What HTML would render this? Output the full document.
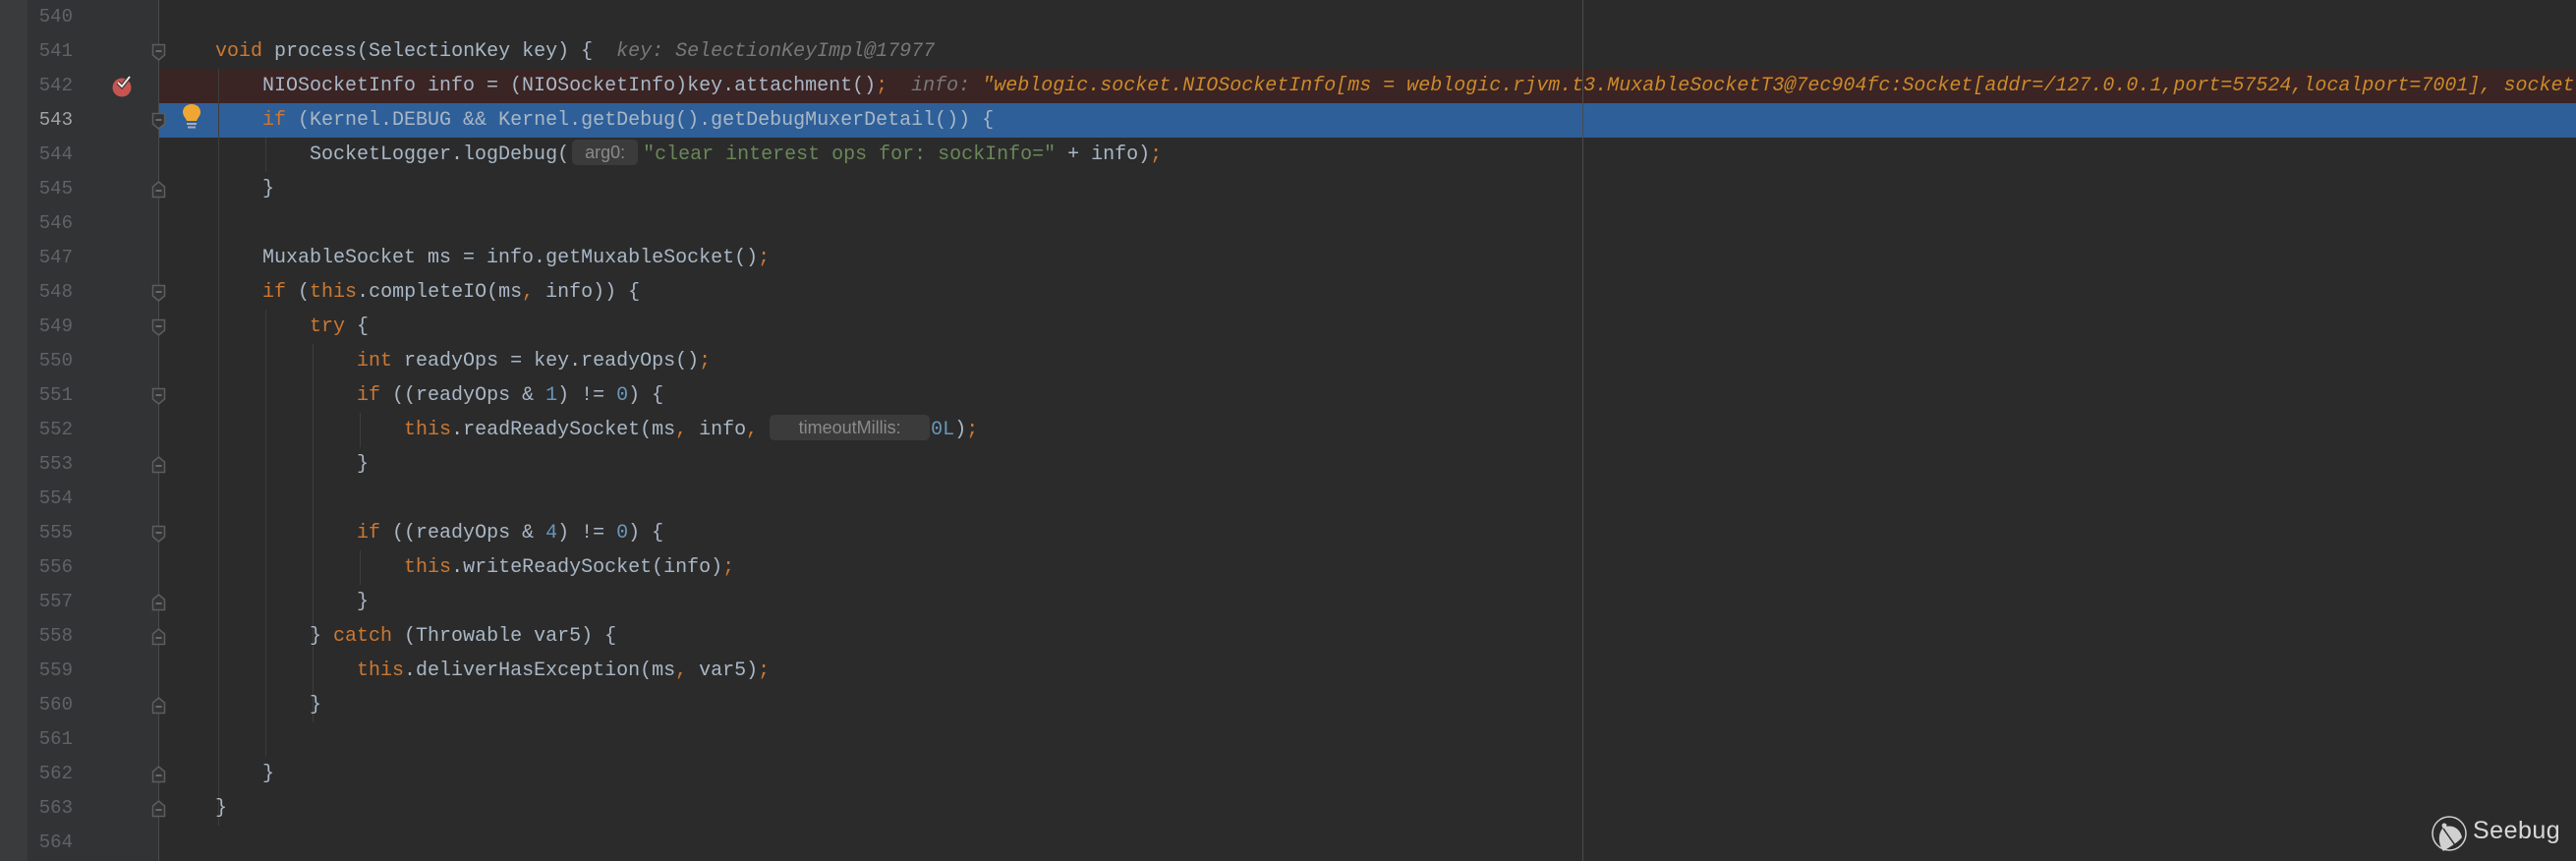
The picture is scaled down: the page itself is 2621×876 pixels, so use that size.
<!DOCTYPE html>
<html><head><meta charset="utf-8"><style>
html,body{margin:0;padding:0;width:2621px;height:876px;overflow:hidden;background:#2b2b2b;}
.strip{position:absolute;left:0;top:0;width:28px;height:876px;background:#393b3d;}
.gut{position:absolute;left:28px;top:0;width:133px;height:876px;background:#313335;}
.fl{position:absolute;left:161px;top:0;width:1px;height:876px;background:#4a4a4a;}
.ln{position:absolute;left:28px;width:46px;text-align:right;font:19px "Liberation Mono",monospace;color:#606366;line-height:35px;height:35px;}
.row{position:absolute;left:161px;width:2460px;height:35px;}
.c{position:absolute;left:171px;font:20px "Liberation Mono",monospace;line-height:35px;height:35px;white-space:pre;color:#a9b7c6;}
.k{color:#cc7832}.s{color:#6a8759}.n{color:#6897bb}
.dbg{font-style:italic;color:#787878}
.dv{font-style:italic;color:#cc8a2a}
.hint{display:inline-block;background:#3b3b3b;color:#8a8a8a;font:18px "Liberation Sans",sans-serif;border-radius:5px;line-height:26px;height:26px;vertical-align:1px;text-align:center;}
.g{position:absolute;width:1px;background:#3d3d3d;}
.fm{position:absolute;left:154px;width:15px;height:18px;}
.rm{position:absolute;left:1610px;top:0;width:1px;height:876px;background:#4b4b4b;}
</style></head><body>
<div class="strip"></div><div class="gut"></div>
<div class="row" style="top:70px;background:#3a2424"></div>
<div class="row" style="top:105px;background:#2e5f99"></div>
<div class="fl"></div>
<div class="rm"></div>

<!-- indent guides -->
<div class="g" style="left:222px;top:70px;height:770px"></div>
<div class="g" style="left:270px;top:140px;height:35px"></div>
<div class="g" style="left:270px;top:315px;height:455px"></div>
<div class="g" style="left:318px;top:350px;height:385px"></div>
<div class="g" style="left:366px;top:420px;height:35px"></div>
<div class="g" style="left:366px;top:560px;height:35px"></div>

<div class="ln" style="top:0">540</div>
<div class="ln" style="top:35px">541</div>
<div class="ln" style="top:70px">542</div>
<div class="ln" style="top:105px;color:#a4a3a3">543</div>
<div class="ln" style="top:140px">544</div>
<div class="ln" style="top:175px">545</div>
<div class="ln" style="top:210px">546</div>
<div class="ln" style="top:245px">547</div>
<div class="ln" style="top:280px">548</div>
<div class="ln" style="top:315px">549</div>
<div class="ln" style="top:350px">550</div>
<div class="ln" style="top:385px">551</div>
<div class="ln" style="top:420px">552</div>
<div class="ln" style="top:455px">553</div>
<div class="ln" style="top:490px">554</div>
<div class="ln" style="top:525px">555</div>
<div class="ln" style="top:560px">556</div>
<div class="ln" style="top:595px">557</div>
<div class="ln" style="top:630px">558</div>
<div class="ln" style="top:665px">559</div>
<div class="ln" style="top:700px">560</div>
<div class="ln" style="top:735px">561</div>
<div class="ln" style="top:770px">562</div>
<div class="ln" style="top:805px">563</div>
<div class="ln" style="top:840px">564</div>

<!-- breakpoint -->
<svg style="position:absolute;left:112px;top:76px" width="26" height="24" viewBox="0 0 26 24"><circle cx="12" cy="13" r="9.5" fill="#c75450"/><path d="M8 8 L12 12 L20 2" stroke="#2b2b2b" stroke-width="4" fill="none"/><path d="M8 8 L12 12 L20 2" stroke="#e8e8e8" stroke-width="2" fill="none"/></svg>
<!-- bulb -->
<svg style="position:absolute;left:184px;top:105px" width="22" height="28" viewBox="0 0 22 28"><path d="M11 1 C5 1 2 5 2 9 C2 13 5 15 6 18 L16 18 C17 15 20 13 20 9 C20 5 17 1 11 1Z" fill="#f0a732"/><rect x="6" y="20" width="10" height="2" fill="#aab"/><rect x="7" y="23.5" width="8" height="2" fill="#aab"/></svg>

<!-- fold markers -->
<svg width="0" height="0" style="position:absolute"><defs>
<g id="fd"><path d="M1.5 1.5 H13.5 V12 L7.5 17 L1.5 12 Z" fill="#313335" stroke="#5d5d5d" stroke-width="1.5"/><path d="M4.5 8 H10.5" stroke="#7a7a7a" stroke-width="1.5"/></g>
<g id="fu"><path d="M1.5 16.5 H13.5 V6 L7.5 1 L1.5 6 Z" fill="#313335" stroke="#5d5d5d" stroke-width="1.5"/><path d="M4.5 10 H10.5" stroke="#7a7a7a" stroke-width="1.5"/></g>
</defs></svg>
<svg class="fm" style="top:44px"><use href="#fd"/></svg>
<svg class="fm" style="top:114px"><use href="#fd"/></svg>
<svg class="fm" style="top:184px"><use href="#fu"/></svg>
<svg class="fm" style="top:289px"><use href="#fd"/></svg>
<svg class="fm" style="top:324px"><use href="#fd"/></svg>
<svg class="fm" style="top:394px"><use href="#fd"/></svg>
<svg class="fm" style="top:464px"><use href="#fu"/></svg>
<svg class="fm" style="top:534px"><use href="#fd"/></svg>
<svg class="fm" style="top:604px"><use href="#fu"/></svg>
<svg class="fm" style="top:639px"><use href="#fu"/></svg>
<svg class="fm" style="top:709px"><use href="#fu"/></svg>
<svg class="fm" style="top:779px"><use href="#fu"/></svg>
<svg class="fm" style="top:814px"><use href="#fu"/></svg>

<!-- code -->
<div class="c" style="top:35px">    <span class="k">void</span> process(SelectionKey key) {  <span class="dbg">key: SelectionKeyImpl@17977</span></div>
<div class="c" style="top:70px">        NIOSocketInfo info = (NIOSocketInfo)key.attachment<span>()</span><span class="k">;</span>  <span class="dbg">info: </span><span class="dv">"weblogic.socket.NIOSocketInfo[ms = weblogic.rjvm.t3.MuxableSocketT3@7ec904fc:Socket[addr=/127.0.0.1,port=57524,localport=7001], socket</span></div>
<div class="c" style="top:105px">        <span class="k">if</span> (Kernel.DEBUG &amp;&amp; Kernel.getDebug().getDebugMuxerDetail()) {</div>
<div class="c" style="top:140px">            SocketLogger.logDebug(<span class="hint" style="width:67px;margin-left:3px;margin-right:5px">arg0:</span><span class="s">"clear interest ops for: sockInfo="</span> + info)<span class="k">;</span></div>
<div class="c" style="top:175px">        }</div>
<div class="c" style="top:245px">        MuxableSocket ms = info.getMuxableSocket()<span class="k">;</span></div>
<div class="c" style="top:280px">        <span class="k">if</span> (<span class="k">this</span>.completeIO(ms<span class="k">,</span> info)) {</div>
<div class="c" style="top:315px">            <span class="k">try</span> {</div>
<div class="c" style="top:350px">                <span class="k">int</span> readyOps = key.readyOps()<span class="k">;</span></div>
<div class="c" style="top:385px">                <span class="k">if</span> ((readyOps &amp; <span class="n">1</span>) != <span class="n">0</span>) {</div>
<div class="c" style="top:420px">                    <span class="k">this</span>.readReadySocket(ms<span class="k">,</span> info<span class="k">,</span> <span class="hint" style="width:163px;margin-right:1px">timeoutMillis:</span><span class="n">0L</span>)<span class="k">;</span></div>
<div class="c" style="top:455px">                }</div>
<div class="c" style="top:525px">                <span class="k">if</span> ((readyOps &amp; <span class="n">4</span>) != <span class="n">0</span>) {</div>
<div class="c" style="top:560px">                    <span class="k">this</span>.writeReadySocket(info)<span class="k">;</span></div>
<div class="c" style="top:595px">                }</div>
<div class="c" style="top:630px">            } <span class="k">catch</span> (Throwable var5) {</div>
<div class="c" style="top:665px">                <span class="k">this</span>.deliverHasException(ms<span class="k">,</span> var5)<span class="k">;</span></div>
<div class="c" style="top:700px">            }</div>
<div class="c" style="top:770px">        }</div>
<div class="c" style="top:805px">    }</div>

<!-- seebug logo -->
<svg style="position:absolute;left:2472px;top:828px" width="40" height="42" viewBox="0 0 40 42"><circle cx="20" cy="20" r="17" fill="none" stroke="#d0d0d0" stroke-width="1.5"/><path d="M14 14 C22 10 31 14 33 24 C28 30 20 34 14 38 C9 31 8 20 14 14Z" fill="#d0d0d0"/><path d="M14 15 L26 32" stroke="#2b2b2b" stroke-width="1.5"/><circle cx="15" cy="12" r="2.5" fill="#d0d0d0"/></svg>
<div style="position:absolute;left:2516px;top:831px;font:25px 'Liberation Sans',sans-serif;color:#d8d8d8;letter-spacing:0.5px">Seebug</div>
</body></html>
